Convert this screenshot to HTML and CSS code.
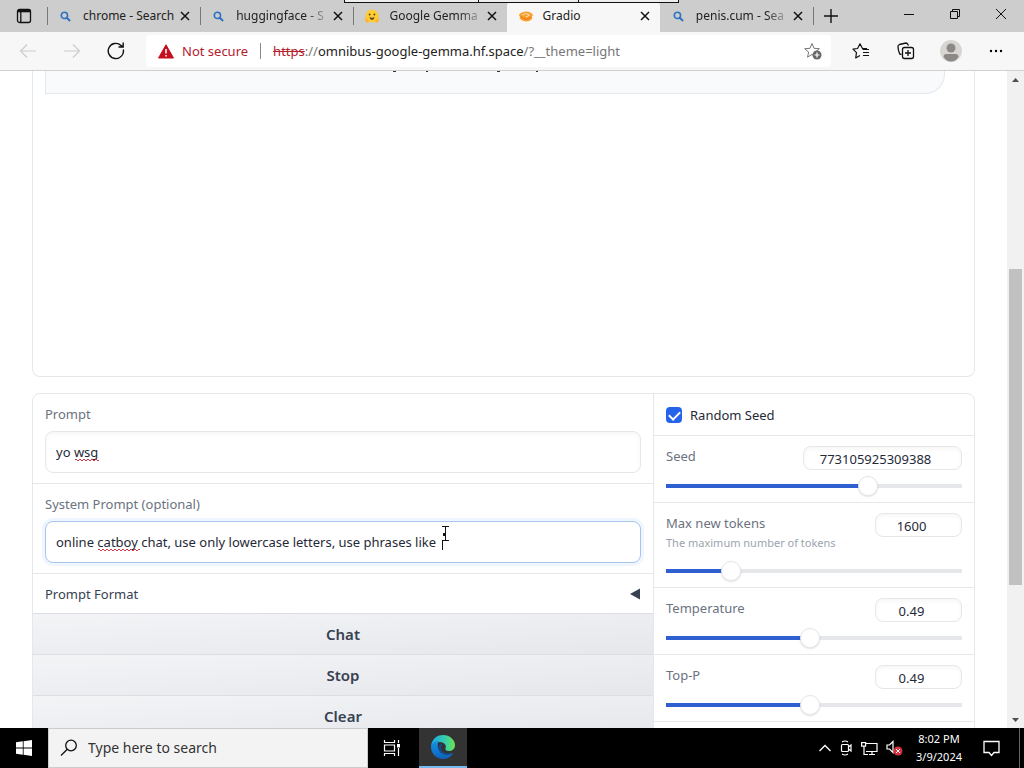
FILE: index.html
```html
<!DOCTYPE html>
<html lang="en">
<head>
<meta charset="utf-8">
<title>Gradio</title>
<link rel="stylesheet" href="styles.css">
</head>
<body>
<svg class="defs" aria-hidden="true">
  <symbol id="lens" viewBox="0 0 12 12"><circle cx="4.8" cy="4.8" r="3.4" fill="none" stroke="#2f74c0" stroke-width="1.8"/><path d="M7.4 7.4L11 11" stroke="#2f74c0" stroke-width="2.2"/></symbol>
  <symbol id="x" viewBox="0 0 10 10"><path d="M1 1l8 8M9 1L1 9" stroke="#111" stroke-width="1.5"/></symbol>
</svg>

<header class="tabstrip">
  <button class="tab-actions" aria-label="Tab actions"><svg width="16" height="16" viewBox="0 0 16 16" fill="none" stroke="#111" stroke-width="1.3"><rect x="1.5" y="1.5" width="13" height="13" rx="2"/><path d="M1.5 3h13" stroke-width="2.600"/><path d="M4.800 4v10.500"/></svg></button>
  <nav class="tabs" aria-label="Tabs">
    <div class="tab"><svg class="favicon"><use href="#lens"/></svg><span class="title">chrome - Search</span><button class="close" aria-label="Close tab"><svg><use href="#x"/></svg></button></div>
    <div class="tab"><svg class="favicon"><use href="#lens"/></svg><span class="title fade">huggingface - S</span><button class="close" aria-label="Close tab"><svg><use href="#x"/></svg></button></div>
    <div class="tab"><svg class="favicon big" viewBox="0 0 16 15"><circle cx="8" cy="7" r="6.500" fill="#fc3"/><path d="M1 9q3 0 4 4Q1 15 1 9M15 9q-3 0-4 4 4 2 4-4" fill="#ffb52b"/><circle cx="5.600" cy="5.500" r=".9" fill="#4a4020"/><circle cx="10.400" cy="5.500" r=".9" fill="#4a4020"/><path d="M5.500 8q2.500 1.500 5 0-.5 3-2.500 3T5.500 8" fill="#6a4a20"/></svg><span class="title fade">Google Gemma</span><button class="close" aria-label="Close tab"><svg><use href="#x"/></svg></button></div>
    <div class="tab active"><svg class="favicon big" viewBox="0 0 16 15"><path d="M1 6Q2 3 8 2.500q5 0 7 3.500-.3 1.500-1.500 2 .8 1 .5 2-2 2.500-6 2.500-4.500-.5-6.500-3.500 0-1 1-1.500Q1 7 1 6" fill="#f9a12e"/><path d="M4 6l4-1.500 3.500 1.500L8 8" fill="none" stroke="#fde0b5"/><path d="M2.500 7.500L8 10.500l5.500-2.500" fill="none" stroke="#ee7b17" stroke-width="1.300"/></svg><span class="title">Gradio</span><button class="close" aria-label="Close tab"><svg><use href="#x"/></svg></button></div>
    <div class="tab last"><svg class="favicon"><use href="#lens"/></svg><span class="title fade">penis.cum - Sea</span><button class="close" aria-label="Close tab"><svg><use href="#x"/></svg></button></div>
  </nav>
  <button class="new-tab" aria-label="New tab"><svg width="14" height="14"><path d="M7 0v14M0 7h14" stroke="#111" stroke-width="1.400"/></svg></button>
  <div class="window-buttons">
    <button aria-label="Minimize"><svg width="12" height="12"><path d="M1 6.500h10" stroke="#111"/></svg></button>
    <button aria-label="Restore"><svg width="12" height="12" fill="none" stroke="#111"><path d="M1.500 3.500h7v7h-7zM3.500 3V1.500h7v7H9"/></svg></button>
    <button aria-label="Close"><svg width="12" height="12"><path d="M1 1l10 10M11 1L1 11" stroke="#111"/></svg></button>
  </div>
  <div class="share-frame"><i></i><i></i><i></i></div>
</header>

<div class="toolbar">
  <div class="nav-buttons">
    <button aria-label="Back"><svg width="18" height="16" fill="none" stroke="#ccc" stroke-width="1.200"><path d="M17 8H2M8 1.500L1.500 8 8 14.500"/></svg></button>
    <button aria-label="Forward"><svg width="18" height="16" fill="none" stroke="#ccc" stroke-width="1.200"><path d="M1 8h15M10 1.500L16.500 8 10 14.500"/></svg></button>
    <button aria-label="Refresh"><svg width="18" height="18" fill="none" stroke="#111" stroke-width="1.400"><path d="M16.300 7.500A7.600 7.600 0 1 1 14 3.400L16 5M16.200.5V5H11.500"/></svg></button>
  </div>
  <div class="address">
    <svg width="16" height="15" viewBox="0 0 16 15"><path d="M8 .8L15.500 14H.5z" fill="#c50f1f" stroke="#c50f1f" stroke-linejoin="round"/><path d="M8 5v4.500M8 11v1.600" stroke="#fff" stroke-width="1.500"/></svg>
    <span class="not-secure">Not secure</span>
    <span class="bar"></span>
    <span class="url"><s>https</s><span>://</span><b>omnibus-google-gemma.hf.space</b><span>/?__theme=light</span></span>
    <button aria-label="Add to favorites"><svg width="18" height="18" viewBox="0 0 18 18"><path d="M8 1.500l2 4.800 5.300.4-4 3.400 1 5L8 12.500l-4.500 2.600 1.200-5-4-3.400L6 6.300z" fill="none" stroke="#777" stroke-linejoin="round"/><circle cx="13" cy="13" r="4.500" fill="#666"/><path d="M13 10.500v5M10.500 13h5" stroke="#fff" stroke-width="1.200"/></svg></button>
  </div>
  <div class="tools">
    <button aria-label="Favorites"><svg width="18" height="16" viewBox="0 0 18 16" fill="none" stroke="#111" stroke-width="1.200" stroke-linejoin="round"><path d="M15 5.500h-4.500L8 .8 5.600 5.500 1 6.200l3.500 3.500L3.700 15 8 12.500M10.500 6.500h6.500M11 9.500h6M11 12.500h6"/></svg></button>
    <button aria-label="Collections"><svg width="18" height="18" viewBox="0 0 18 18" fill="none" stroke="#111" stroke-width="1.300"><path d="M4.500 12.500L2.700 12Q1 8 1 4.500q0-1.500 1.500-2L9 1q1.500 0 2.500 2.500"/><rect x="5.500" y="5.500" width="11" height="11" rx="2"/><path d="M11 8v6M8 11h6"/></svg></button>
    <button aria-label="Profile"><svg width="22" height="22"><circle cx="11" cy="11" r="11" fill="#d8d6d3"/><circle cx="11" cy="8" r="4.500" fill="#8b8886"/><path d="M3.500 17q0-3 3-3h9q3 0 3 3-3 4.500-7.500 4.500T3.500 17" fill="#8b8886"/></svg></button>
    <button aria-label="Settings and more"><svg width="14" height="4"><circle cx="2" cy="2" r="1.200"/><circle cx="7" cy="2" r="1.200"/><circle cx="12" cy="2" r="1.200"/></svg></button>
  </div>
</div>

<div class="viewport">
  <main class="page">
    <section class="chatbot" aria-label="Chatbot">
      <div class="message"><svg width="146" height="2" aria-hidden="true"><path d="M0 .5h3M33 .5h2M104 .5h3M143 .5h2" stroke="#333"/></svg></div>
    </section>
    <section class="controls">
      <div class="left">
        <div class="field">
          <label for="prompt">Prompt</label>
          <div class="textbox"><input id="prompt" type="text" value="yo wsg" spellcheck="false"><i class="squiggle word-wsg"></i></div>
        </div>
        <div class="field">
          <label for="system">System Prompt (optional)</label>
          <div class="textbox focused"><input id="system" type="text" value="online catboy chat, use only lowercase letters, use phrases like " spellcheck="false"><i class="squiggle word-catboy"></i><svg class="cursor" width="9" height="26" viewBox="0 0 9 26"><path d="M1 1.500h7M4.500 1.500v14M2 15.500h6M1.500 15v10" fill="none" stroke="#111"/><path d="M3.500 8v3" stroke="#111" stroke-width="3"/></svg></div>
        </div>
        <button class="accordion"><span>Prompt Format</span><svg width="10" height="12"><path d="M10 .5v11L0 6z" fill="#374151"/></svg></button>
        <button class="action">Chat</button>
        <button class="action">Stop</button>
        <button class="action">Clear</button>
      </div>
      <div class="right">
        <label class="check"><input type="checkbox" checked><span>Random Seed</span></label>
        <div class="slider" style="--value:68%">
          <div class="head"><label for="seed">Seed</label><input class="number wide" type="text" aria-label="Seed value" value="773105925309388"></div>
          <input id="seed" type="range" min="0" max="1000" value="696">
        </div>
        <div class="slider" style="--value:20%">
          <div class="head"><label for="tokens">Max new tokens<small>The maximum number of tokens</small></label><input class="number" type="text" aria-label="Max new tokens value" value="1600"></div>
          <input id="tokens" type="range" min="0" max="1000" value="198">
        </div>
        <div class="slider" style="--value:48%">
          <div class="head"><label for="temp">Temperature</label><input class="number" type="text" aria-label="Temperature value" value="0.49"></div>
          <input id="temp" type="range" min="0" max="1000" value="485">
        </div>
        <div class="slider" style="--value:48%">
          <div class="head"><label for="topp">Top-P</label><input class="number" type="text" aria-label="Top-P value" value="0.49"></div>
          <input id="topp" type="range" min="0" max="1000" value="485">
        </div>
      </div>
    </section>
  </main>
  <div class="scrollbar" aria-hidden="true"><svg width="7" height="4"><path d="M0 4L3.500 0 7 4z" fill="#505050"/></svg><i></i><svg width="7" height="4"><path d="M0 0h7L3.500 4z" fill="#505050"/></svg></div>
</div>

<footer class="taskbar">
  <button class="start" aria-label="Start"><svg width="16" height="16" fill="#fff"><path d="M0 2.300L6.800 1.300V7.500H0zM7.600 1.200L16 0v7.500H7.600zM0 8.400h6.800v6.300L0 13.700zM7.600 8.400H16V16l-8.400-1.200z"/></svg></button>
  <div class="search"><svg width="18" height="18" fill="none" stroke="#111" stroke-width="1.300"><circle cx="11" cy="6.500" r="5.300"/><path d="M7.300 10.300L1 16.500"/></svg><input type="text" aria-label="Search" placeholder="Type here to search"></div>
  <button class="task" aria-label="Task view"><svg width="18" height="16" fill="none" stroke="#fff" stroke-width="1.200"><path d="M1.500 0v2.500h10V0M1.500 5h10v6h-10zM1.500 16v-2.500h10V16M15.500 0v3M15.500 8v8"/><path d="M15.500 4v3.500" stroke-width="3"/></svg></button>
  <button class="task running" aria-label="Microsoft Edge"><svg width="26" height="26" viewBox="0 0 26 26"><defs><linearGradient id="e1" x1="0" x2="1"><stop stop-color="#1ba5e8"/><stop offset=".6" stop-color="#38cfa8"/><stop offset="1" stop-color="#6ce153"/></linearGradient><linearGradient id="e2" x1="0" y1="0" x2="0" y2="1"><stop stop-color="#1494e0"/><stop offset="1" stop-color="#0f61bb"/></linearGradient></defs><path d="M1 12C2 4 8 1 13 1c7 0 12 5 12 10 0 4-3 6-6 6-3 0-4-1-3.500-2.500C17 11 14 8 9.500 8 5 8 2 11 1 12z" fill="url(#e1)"/><path d="M1 12c1-3 4-5 8-5-2 3-3 11 8 13 3 0 5-1 6-1-2 4-6 6-10 6C6 25 .5 19 1 12z" fill="url(#e2)"/><path d="M11 10c-4 2-4 10 6 11 3 0 5-1 6-2-7 2-12-1-12-5 0-2 1-3 2-3z" fill="#124b93"/></svg></button>
  <div class="tray">
    <button aria-label="Show hidden icons"><svg width="12" height="8"><path d="M.5 7L6 1.500 11.500 7" fill="none" stroke="#fff" stroke-width="1.300"/></svg></button>
    <svg width="14" height="16" fill="none" stroke="#fff" stroke-width="1.200"><rect x="2.500" y="4.500" width="7" height="7" rx="1"/><path d="M9.500 7l2.500-2v6L9.500 9M3 2q3-2 6 0M3 14q3 2 6 0"/></svg>
    <svg width="17" height="15" fill="none" stroke="#fff" stroke-width="1.200"><path d="M5 2.500h11v8H5M8 13.500h6M11 10.500v3M3 5v8.500h4"/><rect x=".6" y="1.600" width="4" height="3.500"/></svg>
    <svg width="17" height="16"><path d="M1 5h2.500L7 1.500v11L3.500 9H1z" fill="none" stroke="#fff" stroke-width="1.200"/><circle cx="12" cy="11" r="4.500" fill="#d8303c"/><path d="M10 9l4 4M14 9l-4 4" stroke="#fff"/></svg>
  </div>
  <time class="clock"><span>8:02 PM</span><span>3/9/2024</span></time>
  <button class="notify" aria-label="Notifications"><svg width="17" height="17"><path d="M1 1.500h15v11h-5L8.500 15.500 6 12.500H1z" fill="none" stroke="#fff" stroke-width="1.300"/></svg></button>
  <button class="show-desktop" aria-label="Show desktop"></button>
</footer>
</body>
</html>
```
FILE: styles.css
```css
* { box-sizing: border-box; }

body {
  margin: 0;
  height: 100vh;
  display: flex;
  flex-direction: column;
  overflow: hidden;
  background: #fff;
  color: #1f2937;
  font: 13px/20px "Noto Sans", "Open Sans", sans-serif;
}

button, input { font: inherit; color: inherit; }
button {
  display: flex;
  align-items: center;
  justify-content: center;
  padding: 0;
  border: 0;
  background: none;
}
svg { flex: none; }
.defs { position: absolute; width: 0; height: 0; }

/* Tab strip */
.tabstrip {
  position: relative;
  display: flex;
  flex: none;
  height: 32px;
  background: #cdcdcd;
  color: #222;
  font-size: 12px;
}
.tab-actions { width: 47px; }
.tabs { display: flex; flex: 0 1 766px; min-width: 0; }
.tab {
  display: flex;
  flex: 1 1 0;
  min-width: 0;
  align-items: center;
  padding: 0 6px 0 13px;
  background: linear-gradient(#777, #777) 0 50% / 1px 18px no-repeat;
}
.tab.active { background: #f7f7f7; border-radius: 6px 6px 0 0; }
.tab.last { background: none; }
.favicon { width: 11px; height: 11px; margin-right: 12px; }
.favicon.big { width: 16px; height: 15px; margin: 0 9px 0 -2px; }
.title { flex: 1; min-width: 0; white-space: nowrap; }
.fade { -webkit-mask-image: linear-gradient(90deg, #000 75%, #0004 95%); mask-image: linear-gradient(90deg, #000 75%, #0004 95%); }
.close { flex: none; width: 18px; height: 20px; }
.close svg { width: 10px; height: 10px; }
.new-tab {
  width: 36px;
  background: linear-gradient(#777, #777) 0 50% / 1px 18px no-repeat;
}
.window-buttons { display: flex; margin-left: auto; padding-bottom: 4px; }
.window-buttons button { width: 46px; }
.share-frame {
  position: absolute;
  top: 0;
  left: 344px;
  width: 335px;
  height: 3px;
  display: grid;
  grid-template-columns: 4fr 3fr 3fr;
  border: 1px solid #111;
  border-top: 0;
  background: #eee;
}
.share-frame i + i { border-left: 1px solid #111; }

/* Toolbar */
.toolbar {
  display: flex;
  flex: none;
  align-items: center;
  height: 39px;
  border-bottom: 1px solid #d0d0d0;
  background: #f7f7f7;
}
.nav-buttons { display: flex; padding-left: 6px; }
.nav-buttons button { width: 44px; }
.address {
  display: flex;
  flex: 1;
  align-items: center;
  height: 32px;
  margin-left: 8px;
  padding: 0 9px 0 12px;
  border-radius: 4px;
  background: #fff;
}
.address button { margin-left: auto; }
.not-secure { margin-left: 8px; color: #b5202e; }
.bar { width: 1px; height: 16px; margin: 0 12px; background: #888; }
.url { color: #767676; white-space: nowrap; }
.url b { font-weight: 400; color: #222; }
.url s { color: #b5202e; }
.tools { display: flex; padding: 0 6px 0 7px; }
.tools button { width: 45px; }

/* Page */
.viewport { display: flex; flex: 1; min-height: 0; }
.page {
  display: flex;
  flex: 1;
  flex-direction: column;
  gap: 16px;
  min-width: 0;
  padding: 0 32px;
  overflow: hidden;
}
.chatbot {
  flex: none;
  height: 306px;
  padding: 0 29px 0 12px;
  border: 1px solid #e5e7eb;
  border-top: 0;
  border-radius: 0 0 8px 8px;
}
.message {
  display: flex;
  align-items: flex-start;
  justify-content: center;
  height: 23px;
  padding-right: 58px;
  border: 1px solid #e2e8f0;
  border-top: 0;
  border-radius: 0 0 20px 0;
  background: #f9fafc;
}
.controls {
  display: flex;
  flex: none;
  overflow: hidden;
  border: 1px solid #e5e7eb;
  border-radius: 8px;
}
.left { flex: 620; min-width: 0; }
.right { flex: 320; min-width: 0; border-left: 1px solid #e5e7eb; }
.field { padding: 10px 12px; border-bottom: 1px solid #e5e7eb; }
.field label, .slider label { color: #6b7280; }
.field label { display: block; margin-bottom: 7px; }
.textbox { position: relative; }
.textbox input {
  display: block;
  width: 100%;
  height: 42px;
  padding: 0 10px;
  border: 1px solid #e5e7eb;
  border-radius: 8px;
  outline: 0;
  background: #fff;
  box-shadow: inset 0 2px 4px #0000000a;
}
.textbox.focused input { border-color: #a9c4ee; box-shadow: 0 0 0 3px #eff6ff; }
.squiggle {
  position: absolute;
  top: 28px;
  height: 2px;
  background: linear-gradient(45deg, transparent 35%, #d33a4a 35% 65%, transparent 65%) 0 0 / 4px 2px, linear-gradient(-45deg, transparent 35%, #d33a4a 35% 65%, transparent 65%) 2px 0 / 4px 2px;
}
.word-wsg { left: 30px; width: 24px; }
.word-catboy { left: 53px; width: 42px; }
.cursor { position: absolute; left: 396px; top: 4px; }
.accordion {
  width: 100%;
  height: 39px;
  padding: 0 13px 0 12px;
  justify-content: space-between;
  color: #374151;
}
.action {
  width: 100%;
  height: 41px;
  border-top: 1px solid #dcdee2;
  background: linear-gradient(to bottom right, #f3f4f6, #e5e7eb);
  color: #374151;
  font-size: 15px;
  font-weight: 600;
}
.check {
  display: flex;
  align-items: center;
  gap: 8px;
  height: 42px;
  padding: 0 12px;
  border-bottom: 1px solid #e5e7eb;
}
.check input {
  width: 16px;
  height: 16px;
  margin: 0;
  appearance: none;
  border-radius: 4px;
  background: #2563eb;
}
.check input:checked::before {
  content: "";
  display: block;
  width: 5px;
  height: 9px;
  margin: 2px auto 0;
  border: solid #fff;
  border-width: 0 2px 2px 0;
  transform: rotate(45deg);
}
.slider { padding: 10px 12px 6px; border-bottom: 1px solid #e5e7eb; }
.head { display: flex; align-items: flex-start; justify-content: space-between; }
.head small { display: block; margin-bottom: 2px; color: #9ca3af; font-size: 11px; }
.number {
  width: 87px;
  height: 24px;
  padding: 1px 14px 0 0;
  border: 1px solid #e5e7eb;
  border-radius: 8px;
  background: #fff;
  box-shadow: inset 0 2px 4px #0000000a;
  text-align: center;
}
.number.wide { width: 159px; }
.slider input[type="range"] {
  display: block;
  width: 100%;
  height: 20px;
  margin: 6px 0 0;
  appearance: none;
  background: linear-gradient(90deg, #2f5fd0 var(--value), #e5e7eb var(--value)) 0 50% / 100% 4px no-repeat;
}
.slider input[type="range"]::-webkit-slider-thumb {
  width: 20px;
  height: 20px;
  appearance: none;
  border: 1px solid #e5e7eb;
  border-radius: 50%;
  background: #fff;
  box-shadow: 0 1px 2px #0002;
}
.scrollbar {
  display: grid;
  grid-template-rows: 18px 180fr 316fr 126fr 17px;
  flex: none;
  width: 17px;
  background: #f1f1f1;
  justify-items: center;
  align-items: center;
}
.scrollbar i { grid-row: 3; width: 13px; height: 100%; background: #c1c1c1; }
.scrollbar svg:last-child { grid-row: 5; }

/* Taskbar */
.taskbar { display: flex; flex: none; height: 40px; background: #000; color: #fff; }
.start { width: 48px; }
.search {
  display: flex;
  flex: 0 1 320px;
  align-items: center;
  gap: 10px;
  padding: 0 11px;
  border: 1px solid #ccc;
  background: #f3f3f3;
}
.search input { min-width: 0; flex: 1; padding: 0; border: 0; outline: 0; background: none; font-size: 14px; }
.search input::placeholder { color: #333; }
.task { width: 48px; margin-right: 3px; }
.task.running { margin-right: 0; background: #333; border-bottom: 2px solid #76b9ed; }
.tray { display: flex; align-items: center; gap: 8px; margin-left: auto; }
.clock {
  display: flex;
  flex-direction: column;
  justify-content: center;
  width: 72px;
  font-size: 11px;
  line-height: 18px;
  text-align: center;
}
.notify { width: 32px; margin-right: 12px; }
.show-desktop { width: 5px; border-left: 1px solid #666; }
```
